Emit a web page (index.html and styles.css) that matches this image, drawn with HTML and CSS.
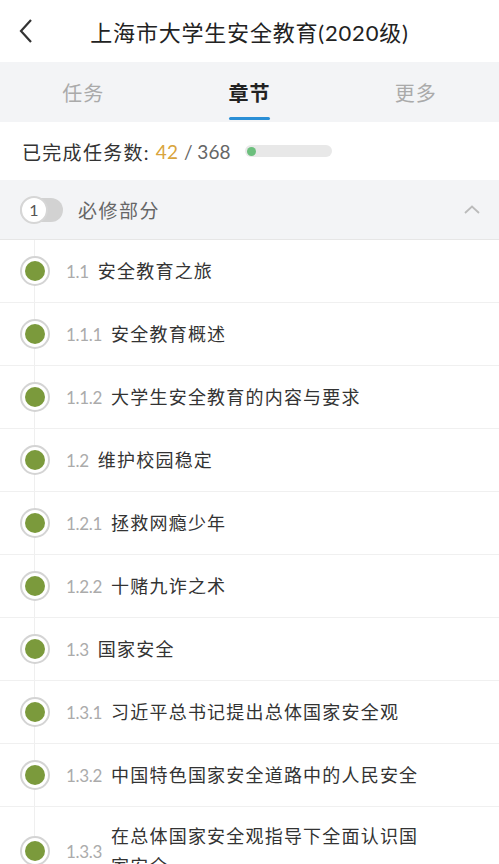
FILE: index.html
```html
<!DOCTYPE html>
<html lang="zh-CN">
<head>
    <meta charset="UTF-8">
    <meta name="viewport" content="width=device-width, initial-scale=1.0">
    <title>上海市大学生安全教育(2020级)</title>
    <link rel="stylesheet" href="styles.css">
</head>
<body>
    <div class="topbar">
        <div class="back">
            <svg width="16" height="26" viewBox="0 0 16 26"><polyline points="13,2 3,13 13,24" fill="none" stroke="#333" stroke-width="2.2"/></svg>
        </div>
        <div class="title">上海市大学生安全教育(2020级)</div>
        <div class="back"></div>
    </div>

    <div class="tabs">
        <div class="tab">任务</div>
        <div class="tab active">章节</div>
        <div class="tab">更多</div>
    </div>

    <div class="progress-row">
        <span class="label">已完成任务数:</span>
        <span class="done">42</span>
        <span class="total">/ 368</span>
        <div class="bar"><div class="fill" style="width: 11.4%"></div></div>
    </div>

    <div class="section">
        <div class="toggle"><span class="knob">1</span></div>
        <span class="section-name">必修部分</span>
        <svg class="chevron" width="16" height="9" viewBox="0 0 16 9"><polyline points="1,8 8,1.5 15,8" fill="none" stroke="#bbb" stroke-width="1.8"/></svg>
    </div>

    <ul class="chapters">
        <li><span class="dot"><i></i></span><span class="num">1.1</span><span class="name">安全教育之旅</span></li>
        <li><span class="dot"><i></i></span><span class="num">1.1.1</span><span class="name">安全教育概述</span></li>
        <li><span class="dot"><i></i></span><span class="num">1.1.2</span><span class="name">大学生安全教育的内容与要求</span></li>
        <li><span class="dot"><i></i></span><span class="num">1.2</span><span class="name">维护校园稳定</span></li>
        <li><span class="dot"><i></i></span><span class="num">1.2.1</span><span class="name">拯救网瘾少年</span></li>
        <li><span class="dot"><i></i></span><span class="num">1.2.2</span><span class="name">十赌九诈之术</span></li>
        <li><span class="dot"><i></i></span><span class="num">1.3</span><span class="name">国家安全</span></li>
        <li><span class="dot"><i></i></span><span class="num">1.3.1</span><span class="name">习近平总书记提出总体国家安全观</span></li>
        <li><span class="dot"><i></i></span><span class="num">1.3.2</span><span class="name">中国特色国家安全道路中的人民安全</span></li>
        <li><span class="dot"><i></i></span><span class="num">1.3.3</span><span class="name">在总体国家安全观指导下全面认识国家安全</span></li>
    </ul>
</body>
</html>
```

FILE: styles.css
```css
body {
    margin: 0;
    font-family: Lato, "Noto Sans CJK SC", sans-serif;
    background: #fff;
    color: #333;
    overflow: hidden;
}
.topbar {
    display: flex;
    align-items: center;
    height: 62px;
}
.back {
    width: 54px;
    display: flex;
    justify-content: center;
}
.back svg {
    margin-left: -2px;
}
.title {
    flex: 1;
    text-align: center;
    font-size: 22px;
    letter-spacing: 0.8px;
    color: #222;
}
.tabs {
    display: flex;
    height: 60px;
    background: #f3f4f6;
}
.tab {
    flex: 1;
    display: flex;
    align-items: center;
    justify-content: center;
    font-size: 20px;
    color: #aaa;
    letter-spacing: 1px;
    position: relative;
}
.tab.active {
    color: #222;
    font-weight: bold;
}
.tab.active::after {
    content: "";
    position: absolute;
    bottom: 2px;
    left: 50%;
    width: 41px;
    height: 3px;
    margin-left: -20px;
    background: #2a8fd6;
    border-radius: 2px;
}
.progress-row {
    display: flex;
    align-items: center;
    height: 58px;
    padding-left: 22px;
    font-size: 19px;
}
.progress-row .label {
    color: #333;
    letter-spacing: 1.3px;
}
.progress-row .done {
    color: #d9a43c;
    margin-left: 6px;
}
.progress-row .total {
    color: #666;
    margin-left: 6px;
}
.bar {
    width: 87px;
    height: 12px;
    padding: 1.5px;
    box-sizing: border-box;
    margin-left: 15px;
    background: #e8e8e8;
    border-radius: 6px;
}
.fill {
    height: 100%;
    background: #6cbf7d;
    border-radius: 5px;
}
.section {
    display: flex;
    align-items: center;
    height: 59px;
    padding: 0 19px 0 20px;
    background: #f3f4f6;
    border-bottom: 1px solid #e6e6e6;
}
.toggle {
    width: 43px;
    height: 24px;
    border-radius: 12px;
    background: #d2d2d2;
    display: flex;
    align-items: center;
}
.knob {
    width: 28px;
    height: 28px;
    box-sizing: border-box;
    border: 2px solid #d6d6d6;
    border-radius: 50%;
    background: #fff;
    display: flex;
    align-items: center;
    justify-content: center;
    font-size: 16px;
    color: #555;
}
.section-name {
    margin-left: 15px;
    font-size: 19px;
    color: #666;
    letter-spacing: 1.5px;
    flex: 1;
}
.chapters {
    list-style: none;
    margin: 0;
    padding: 0;
}
.chapters li {
    display: flex;
    align-items: center;
    min-height: 62px;
    padding: 0 70px 0 20px;
    border-bottom: 1px solid #f0f0f0;
    background: linear-gradient(#efefef, #efefef) no-repeat 34px 0 / 1px 100%;
}
.chapters li:last-child {
    padding-top: 13px;
    padding-bottom: 13px;
}
.dot {
    flex: none;
    width: 30px;
    height: 30px;
    box-sizing: border-box;
    border: 2px solid #d4d4d4;
    border-radius: 50%;
    background: #fff;
    display: flex;
    align-items: center;
    justify-content: center;
}
.dot i {
    width: 20px;
    height: 20px;
    border-radius: 50%;
    background: #7b9a3c;
}
.num {
    flex: none;
    margin-left: 16px;
    font-size: 17px;
    letter-spacing: -0.3px;
    color: #ababab;
}
.name {
    margin-left: 9px;
    font-size: 18px;
    line-height: 30px;
    letter-spacing: 1.2px;
    color: #333;
}
```
